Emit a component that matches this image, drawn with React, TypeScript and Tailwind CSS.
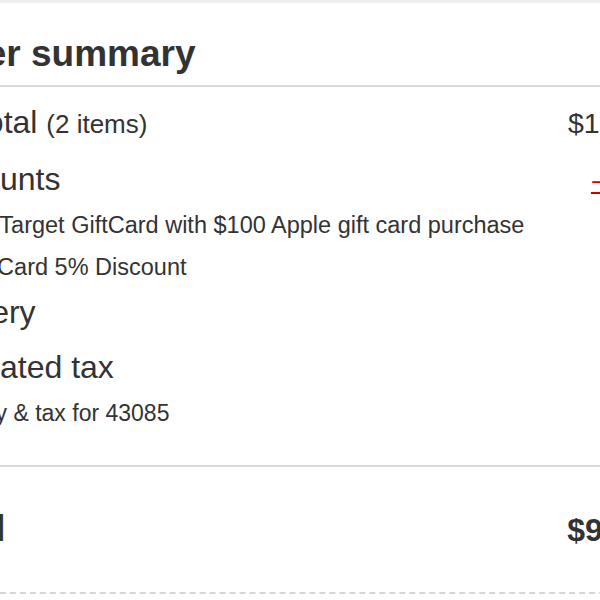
export default function App() {
  // the summary panel is wider than the window, so it is clipped on both sides
  return (
    <div className="h-[600px] w-[600px] overflow-hidden bg-white font-['Liberation_Sans',Arial,sans-serif] text-[#333333]">
      <div className="h-[3px] bg-[#efefef]" />

      <div className="ml-[-80px] w-[745px]">
        {/* Heading */}
        <h2 className="pt-[27px] text-[37px] leading-[48px] font-bold">Order summary</h2>
        <div className="mt-[7px] h-[2px] bg-[#d9d9d9]" />

        {/* Subtotal */}
        <div className="mt-[15px] flex items-baseline justify-between leading-[40px]">
          <div className="text-[32px]">
            Subtotal <span className="text-[26px]">(2 items)</span>
          </div>
          <div className="mr-[-6px] text-[28.5px]">$174.97</div>
        </div>

        {/* Discounts */}
        <div className="mt-[15px] flex items-baseline justify-between leading-[40px]">
          <div className="text-[32px]">Discounts</div>
          <div className="text-[24px] text-[#cc0000] underline">−$5.75</div>
        </div>
        <ul className="mt-[2px] pl-[34px] text-[23.5px] leading-[42px]">
          <li>$15 Target GiftCard with $100 Apple gift card purchase</li>
          <li>RedCard 5% Discount</li>
        </ul>

        {/* Delivery */}
        <div className="mt-[4px] flex items-baseline justify-between leading-[40px]">
          <div className="text-[32px]">Delivery</div>
          <div className="text-[26px]">Free</div>
        </div>

        {/* Tax */}
        <div className="mt-[13px] flex items-baseline justify-between leading-[40px]">
          <div className="text-[32px]">Estimated tax</div>
          <div className="text-[26px]">$6.84</div>
        </div>
        <div className="mt-[4px] pl-[4px] text-[23px] leading-[41px]">Delivery &amp; tax for 43085</div>

        <div className="mt-[31px] h-[2px] bg-[#d9d9d9]" />

        {/* Total */}
        <div className="mt-[40px] flex items-baseline justify-between leading-[44px] font-bold">
          <div className="text-[37px]">Total</div>
          <div className="text-[32px]">$99.74</div>
        </div>

        <div className="mt-[40px] border-t-2 border-dashed border-[#d6d6d6]" />
      </div>
    </div>
  );
}
